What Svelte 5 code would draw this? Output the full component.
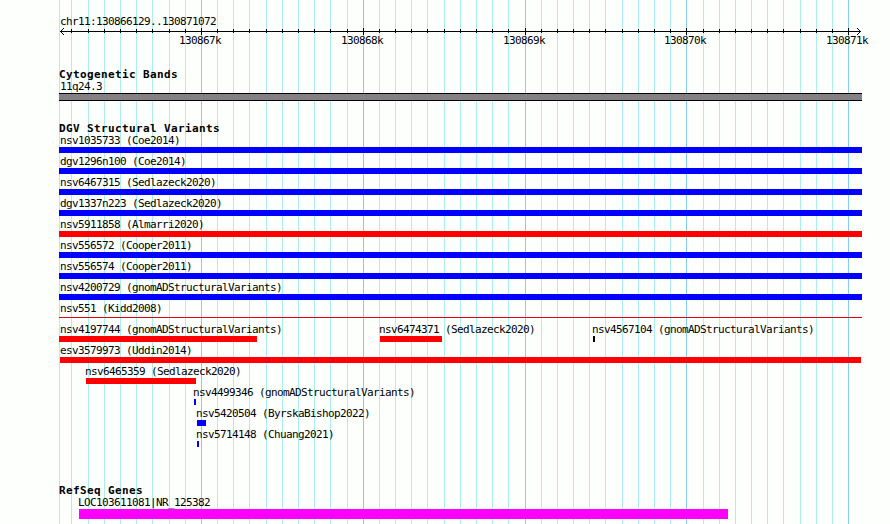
<script lang="ts">
	type Feature = {
		name: string;
		start: number;
		end: number;
		color?: string;
		thin?: boolean;
		labelAt?: number;
	};

	// Panel extent in pixels
	const left = 59;
	const right = 862;
	const blue = '#0000ff';
	const red = '#ff0000';

	// Minor ticks every 100 bp, major ticks every 1 kb
	const ticks = Array.from({ length: 49 }, (_, i) => ({
		x: Math.floor(71.92 + i * 16.182),
		major: i % 10 === 8
	}));
	const majors = ticks.filter((t) => t.major);

	const full = (name: string, color: string): Feature => ({ name, start: left, end: right, color, labelAt: 60 });

	const variants: Feature[][] = [
		[full('nsv1035733 (Coe2014)', blue)],
		[full('dgv1296n100 (Coe2014)', blue)],
		[full('nsv6467315 (Sedlazeck2020)', blue)],
		[full('dgv1337n223 (Sedlazeck2020)', blue)],
		[full('nsv5911858 (Almarri2020)', red)],
		[full('nsv556572 (Cooper2011)', blue)],
		[full('nsv556574 (Cooper2011)', blue)],
		[full('nsv4200729 (gnomADStructuralVariants)', blue)],
		[{ ...full('nsv551 (Kidd2008)', '#e00010'), thin: true }],
		[
			{ name: 'nsv4197744 (gnomADStructuralVariants)', start: 59, end: 257, color: red, labelAt: 60 },
			{ name: 'nsv6474371 (Sedlazeck2020)', start: 380, end: 442, color: red, labelAt: 379 },
			{ name: 'nsv4567104 (gnomADStructuralVariants)', start: 593, end: 595, color: '#000', labelAt: 592 }
		],
		[{ name: 'esv3579973 (Uddin2014)', start: 60, end: 861, color: red }],
		[{ name: 'nsv6465359 (Sedlazeck2020)', start: 86, end: 196, color: red, labelAt: 85 }],
		[{ name: 'nsv4499346 (gnomADStructuralVariants)', start: 194, end: 196, color: blue, labelAt: 193 }],
		[{ name: 'nsv5420504 (ByrskaBishop2022)', start: 197, end: 206, color: blue, labelAt: 196 }],
		[{ name: 'nsv5714148 (Chuang2021)', start: 197, end: 199, color: blue, labelAt: 196 }]
	];
</script>

<main class="browser">
	<svg class="gridlines" width="890" height="524" shape-rendering="crispEdges" aria-hidden="true">
		<rect x={left} width="1" height="524" fill="#afeeee" />
		{#each ticks as tick}
			<rect x={tick.x} width="1" height="524" fill={tick.major ? '#87ceeb' : '#afeeee'} />
		{/each}
	</svg>

	<header class="ruler">
		<div class="region">chr11:130866129..130871072</div>
		<svg class="axis" width="890" height="7" shape-rendering="crispEdges" aria-hidden="true">
			<rect x="60" y="3" width="801" height="1" />
			{#each [1, 2, 3] as n}
				<rect x={60 + n} y={3 - n} width="1" height="1" />
				<rect x={60 + n} y={3 + n} width="1" height="1" />
				<rect x={860 - n} y={3 - n} width="1" height="1" />
				<rect x={860 - n} y={3 + n} width="1" height="1" />
			{/each}
			{#each ticks as tick}
				<rect x={tick.x} y={tick.major ? 0 : 1} width="1" height={tick.major ? 7 : 4} />
			{/each}
		</svg>
		<div class="scale">
			{#each majors as tick, i}
				<span style="margin-left: {tick.x - 22}px">{130867 + i}k</span>
			{/each}
		</div>
	</header>

	<section class="track track--bands">
		<h2>Cytogenetic Bands</h2>
		<div class="label band-label">11q24.3</div>
		<div class="band"></div>
	</section>

	<section class="track track--variants">
		<h2>DGV Structural Variants</h2>
		{#each variants as row}
			<div class="row">
				{#each row as f}
					<div class="feature">
						<div class="label" style="margin-left: {f.labelAt ?? f.start}px">{f.name}</div>
						<div
							class="bar"
							class:bar--thin={f.thin}
							style="margin-left: {f.start}px; width: {f.end - f.start}px; background: {f.color}"
						></div>
					</div>
				{/each}
			</div>
		{/each}
	</section>

	<section class="track track--genes">
		<h2>RefSeq Genes</h2>
		<div class="label gene-label">LOC103611081|NR_125382</div>
		<div class="gene"></div>
	</section>
</main>

<style>
	:global(body) {
		background: #fcfffc;
	}

	.browser {
		position: relative;
		width: 890px;
		height: 524px;
		overflow: hidden;
		color: #000;
		font-family: 'DejaVu Sans Mono', monospace;
		font-size: 11px;
		line-height: 16px;
		letter-spacing: -0.622px;
		white-space: nowrap;
		font-variant-ligatures: none;
	}

	.gridlines {
		position: absolute;
		top: 0;
		left: 0;
	}

	.ruler,
	.track {
		position: relative;
	}

	.ruler {
		box-sizing: border-box;
		padding-top: 14px;
		height: 67px;
	}

	.region {
		margin-left: 60px;
		height: 14px;
	}

	.axis {
		display: block;
	}

	.scale {
		display: grid;
		margin-top: -2px;
	}

	.scale span {
		grid-area: 1 / 1;
	}

	h2 {
		margin: 0 0 0 59px;
		height: 12px;
		font-size: 11px;
		font-weight: bold;
		line-height: 16px;
		letter-spacing: 0.378px;
	}

	/* Cytogenetic band */
	.track--bands {
		height: 54px;
	}

	.band-label {
		margin-left: 60px;
	}

	.band {
		box-sizing: border-box;
		margin-left: 59px;
		width: 803px;
		height: 8px;
		background: #858085;
		border: solid #000;
		border-width: 1px 0;
	}

	/* Structural variants */
	.track--variants {
		height: 362px;
	}

	.row {
		display: grid;
		height: 21px;
	}

	.feature {
		grid-area: 1 / 1;
	}

	.label {
		height: 14px;
	}

	.bar {
		height: 6px;
	}

	.bar--thin {
		height: 1px;
		margin-top: 2px;
	}

	/* Genes */
	.gene-label {
		margin-left: 78px;
	}

	.gene {
		margin-left: 79px;
		width: 649px;
		height: 10px;
		background: #ff00ff;
	}
</style>
